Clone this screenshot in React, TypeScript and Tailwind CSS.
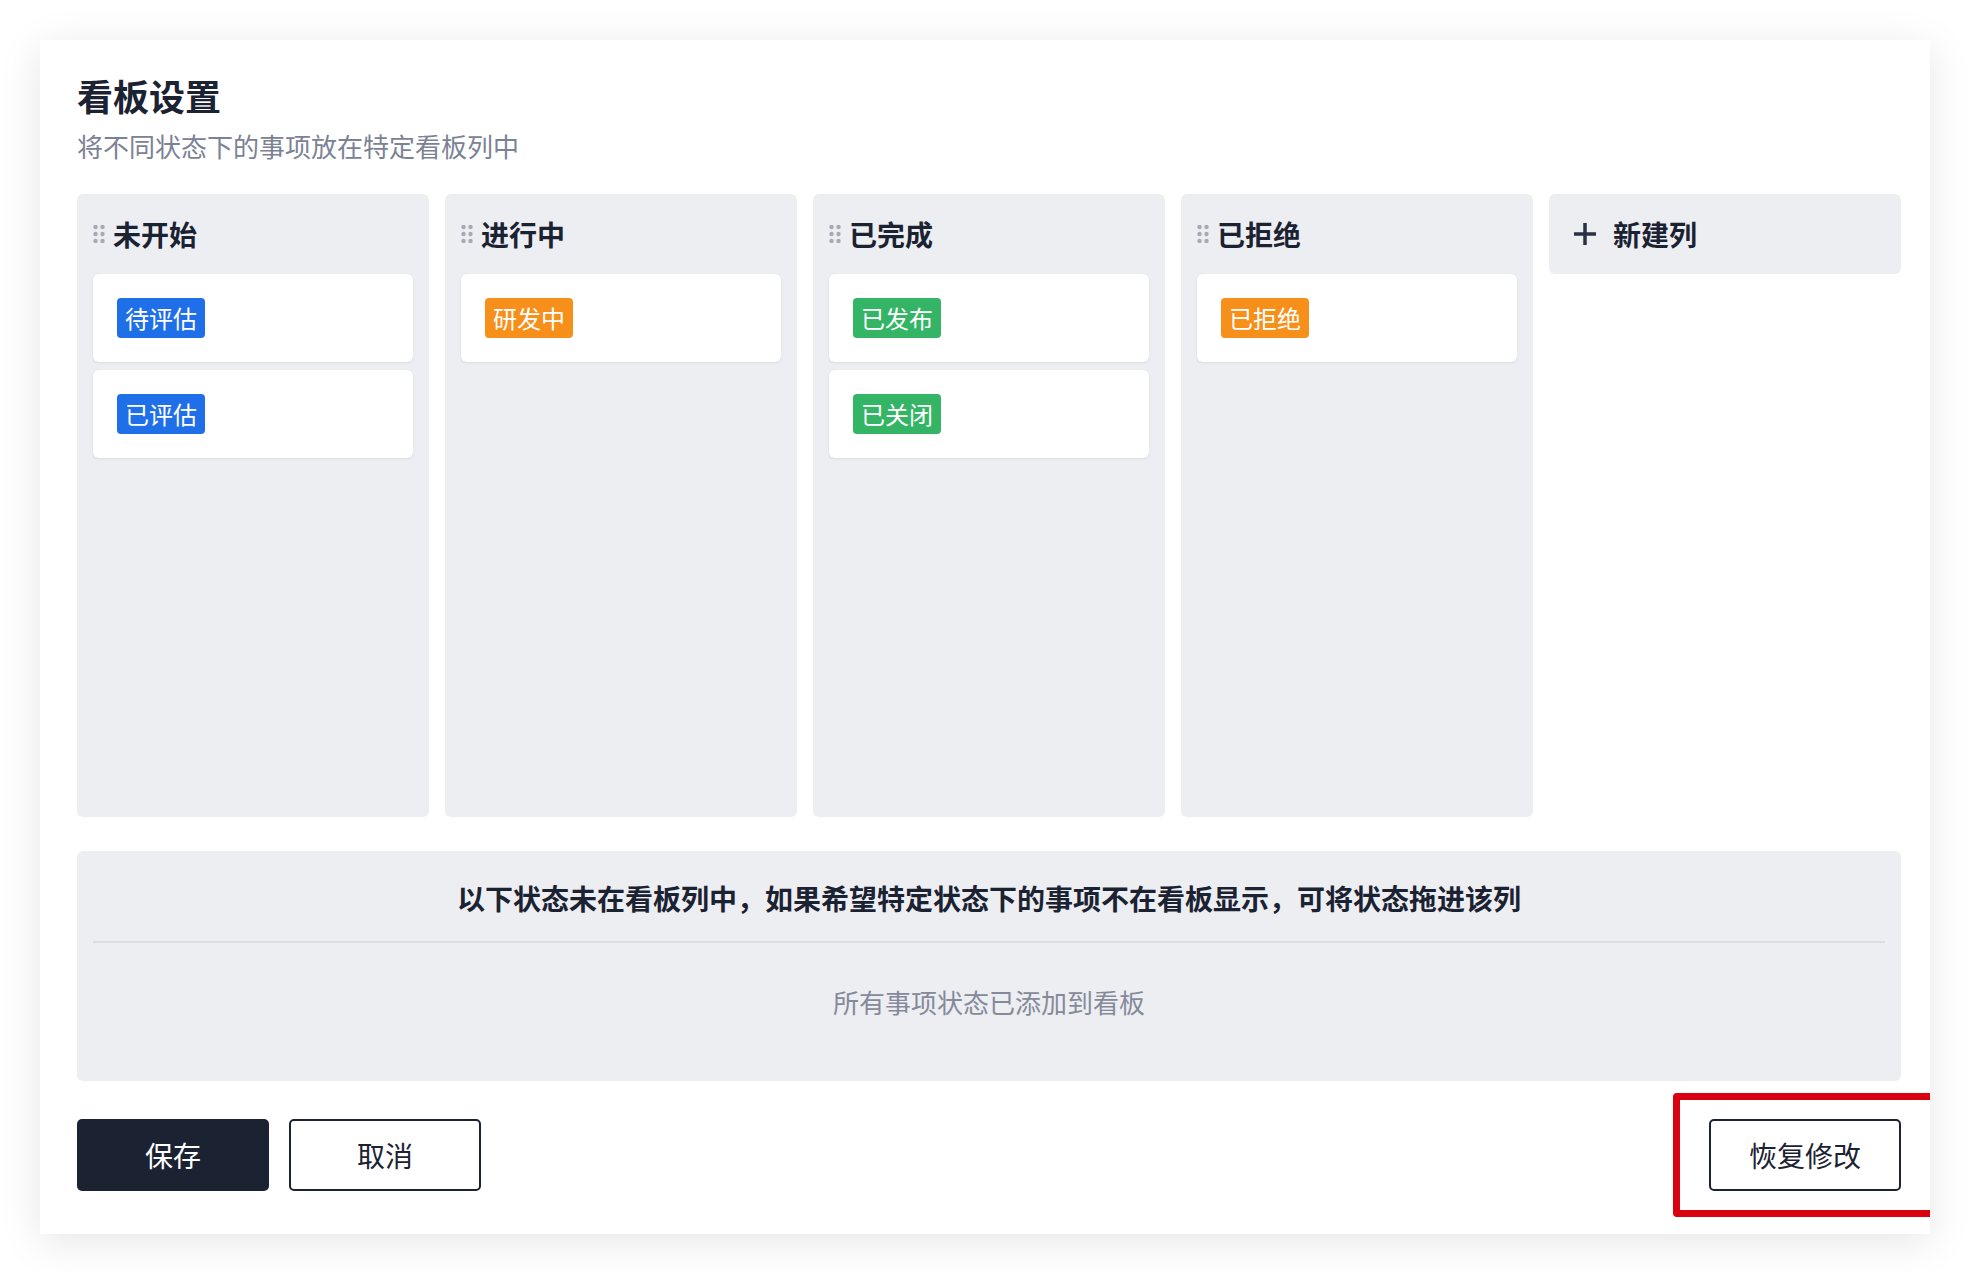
import React from 'react'

type Tone = 'blue' | 'orange' | 'green'

type Column = {
  title: string
  items: { label: string; tone: Tone }[]
}

const columns: Column[] = [
  {
    title: '未开始',
    items: [
      { label: '待评估', tone: 'blue' },
      { label: '已评估', tone: 'blue' },
    ],
  },
  { title: '进行中', items: [{ label: '研发中', tone: 'orange' }] },
  {
    title: '已完成',
    items: [
      { label: '已发布', tone: 'green' },
      { label: '已关闭', tone: 'green' },
    ],
  },
  { title: '已拒绝', items: [{ label: '已拒绝', tone: 'orange' }] },
]

const toneClass: Record<Tone, string> = {
  blue: 'bg-[#1f6fe8]',
  orange: 'bg-[#f6901b]',
  green: 'bg-[#34b465]',
}

function DragHandle() {
  return (
    <svg width="12" height="18" viewBox="0 0 12 18" className="shrink-0">
      {[2, 9, 16].map((cy) => (
        <g key={cy} fill="#a6aab3">
          <circle cx="2.5" cy={cy} r="2.2" />
          <circle cx="9.5" cy={cy} r="2.2" />
        </g>
      ))}
    </svg>
  )
}

function Tag({ label, tone }: { label: string; tone: Tone }) {
  return (
    <span
      className={`inline-flex h-10 items-center rounded-[4px] px-2 text-[24px] leading-none text-white ${toneClass[tone]}`}
    >
      {label}
    </span>
  )
}

export default function App() {
  return (
    <div className="min-h-screen bg-white p-10 font-['Noto_Sans_CJK_SC','Noto_Sans',sans-serif] text-[#1b2232]">
      <div className="relative flex h-[1194px] flex-col overflow-hidden bg-white pl-[37px] pr-[29px] pt-[30px] shadow-[0_8px_40px_rgba(0,0,0,0.10)]">
        <h1 className="text-[36px] font-bold leading-[50px]">看板设置</h1>
        <p className="mt-[7px] text-[26px] leading-[38px] text-[#7b8295]">
          将不同状态下的事项放在特定看板列中
        </p>

        <div className="mt-[29px] grid grid-cols-5 items-start gap-4">
          {columns.map((col) => (
            <div key={col.title} className="h-[623px] rounded-md bg-[#edeef2]">
              <div className="flex h-20 items-center gap-2 pl-4">
                <DragHandle />
                <span className="text-[28px] font-bold leading-none">{col.title}</span>
              </div>
              <div className="flex flex-col gap-2 px-4">
                {col.items.map((it) => (
                  <div
                    key={it.label}
                    className="flex h-[88px] items-center rounded-md bg-white pl-6 shadow-[0_1px_3px_rgba(0,0,0,0.08)]"
                  >
                    <Tag label={it.label} tone={it.tone} />
                  </div>
                ))}
              </div>
            </div>
          ))}
          <div className="flex h-20 items-center gap-4 rounded-md bg-[#edeef2] pl-6">
            <svg width="24" height="24" viewBox="0 0 24 24" className="shrink-0">
              <path d="M12 1v22M1 12h22" stroke="#2a3143" strokeWidth="3.5" />
            </svg>
            <span className="text-[28px] font-bold leading-none">新建列</span>
          </div>
        </div>

        <div className="mt-[34px] h-[230px] rounded-md bg-[#edeef2] px-4">
          <div className="flex h-[92px] items-center justify-center border-b-2 border-[#dcdde3] pt-1">
            <span className="text-[28px] font-bold leading-none">
              以下状态未在看板列中，如果希望特定状态下的事项不在看板显示，可将状态拖进该列
            </span>
          </div>
          <p className="pt-[40px] text-center text-[26px] leading-[38px] text-[#858a9b]">
            所有事项状态已添加到看板
          </p>
        </div>

        <div className="mt-[38px] flex items-center">
          <button
            type="button"
            className="h-[72px] w-[192px] rounded-[5px] bg-[#1b2232] text-[28px] text-white"
          >
            保存
          </button>
          <button
            type="button"
            className="ml-5 h-[72px] w-[192px] rounded-[5px] border-2 border-[#1b2232] bg-white text-[28px] text-[#1b2232]"
          >
            取消
          </button>
          <button
            type="button"
            className="ml-auto h-[72px] w-[192px] rounded-[5px] border-2 border-[#1b2232] bg-white text-[28px] text-[#1b2232]"
          >
            恢复修改
          </button>
        </div>

        <div className="pointer-events-none absolute left-[1633px] right-[-20px] top-[1053px] h-[124px] rounded-[4px] border-[7px] border-[#d9000f]" />
      </div>
    </div>
  )
}
